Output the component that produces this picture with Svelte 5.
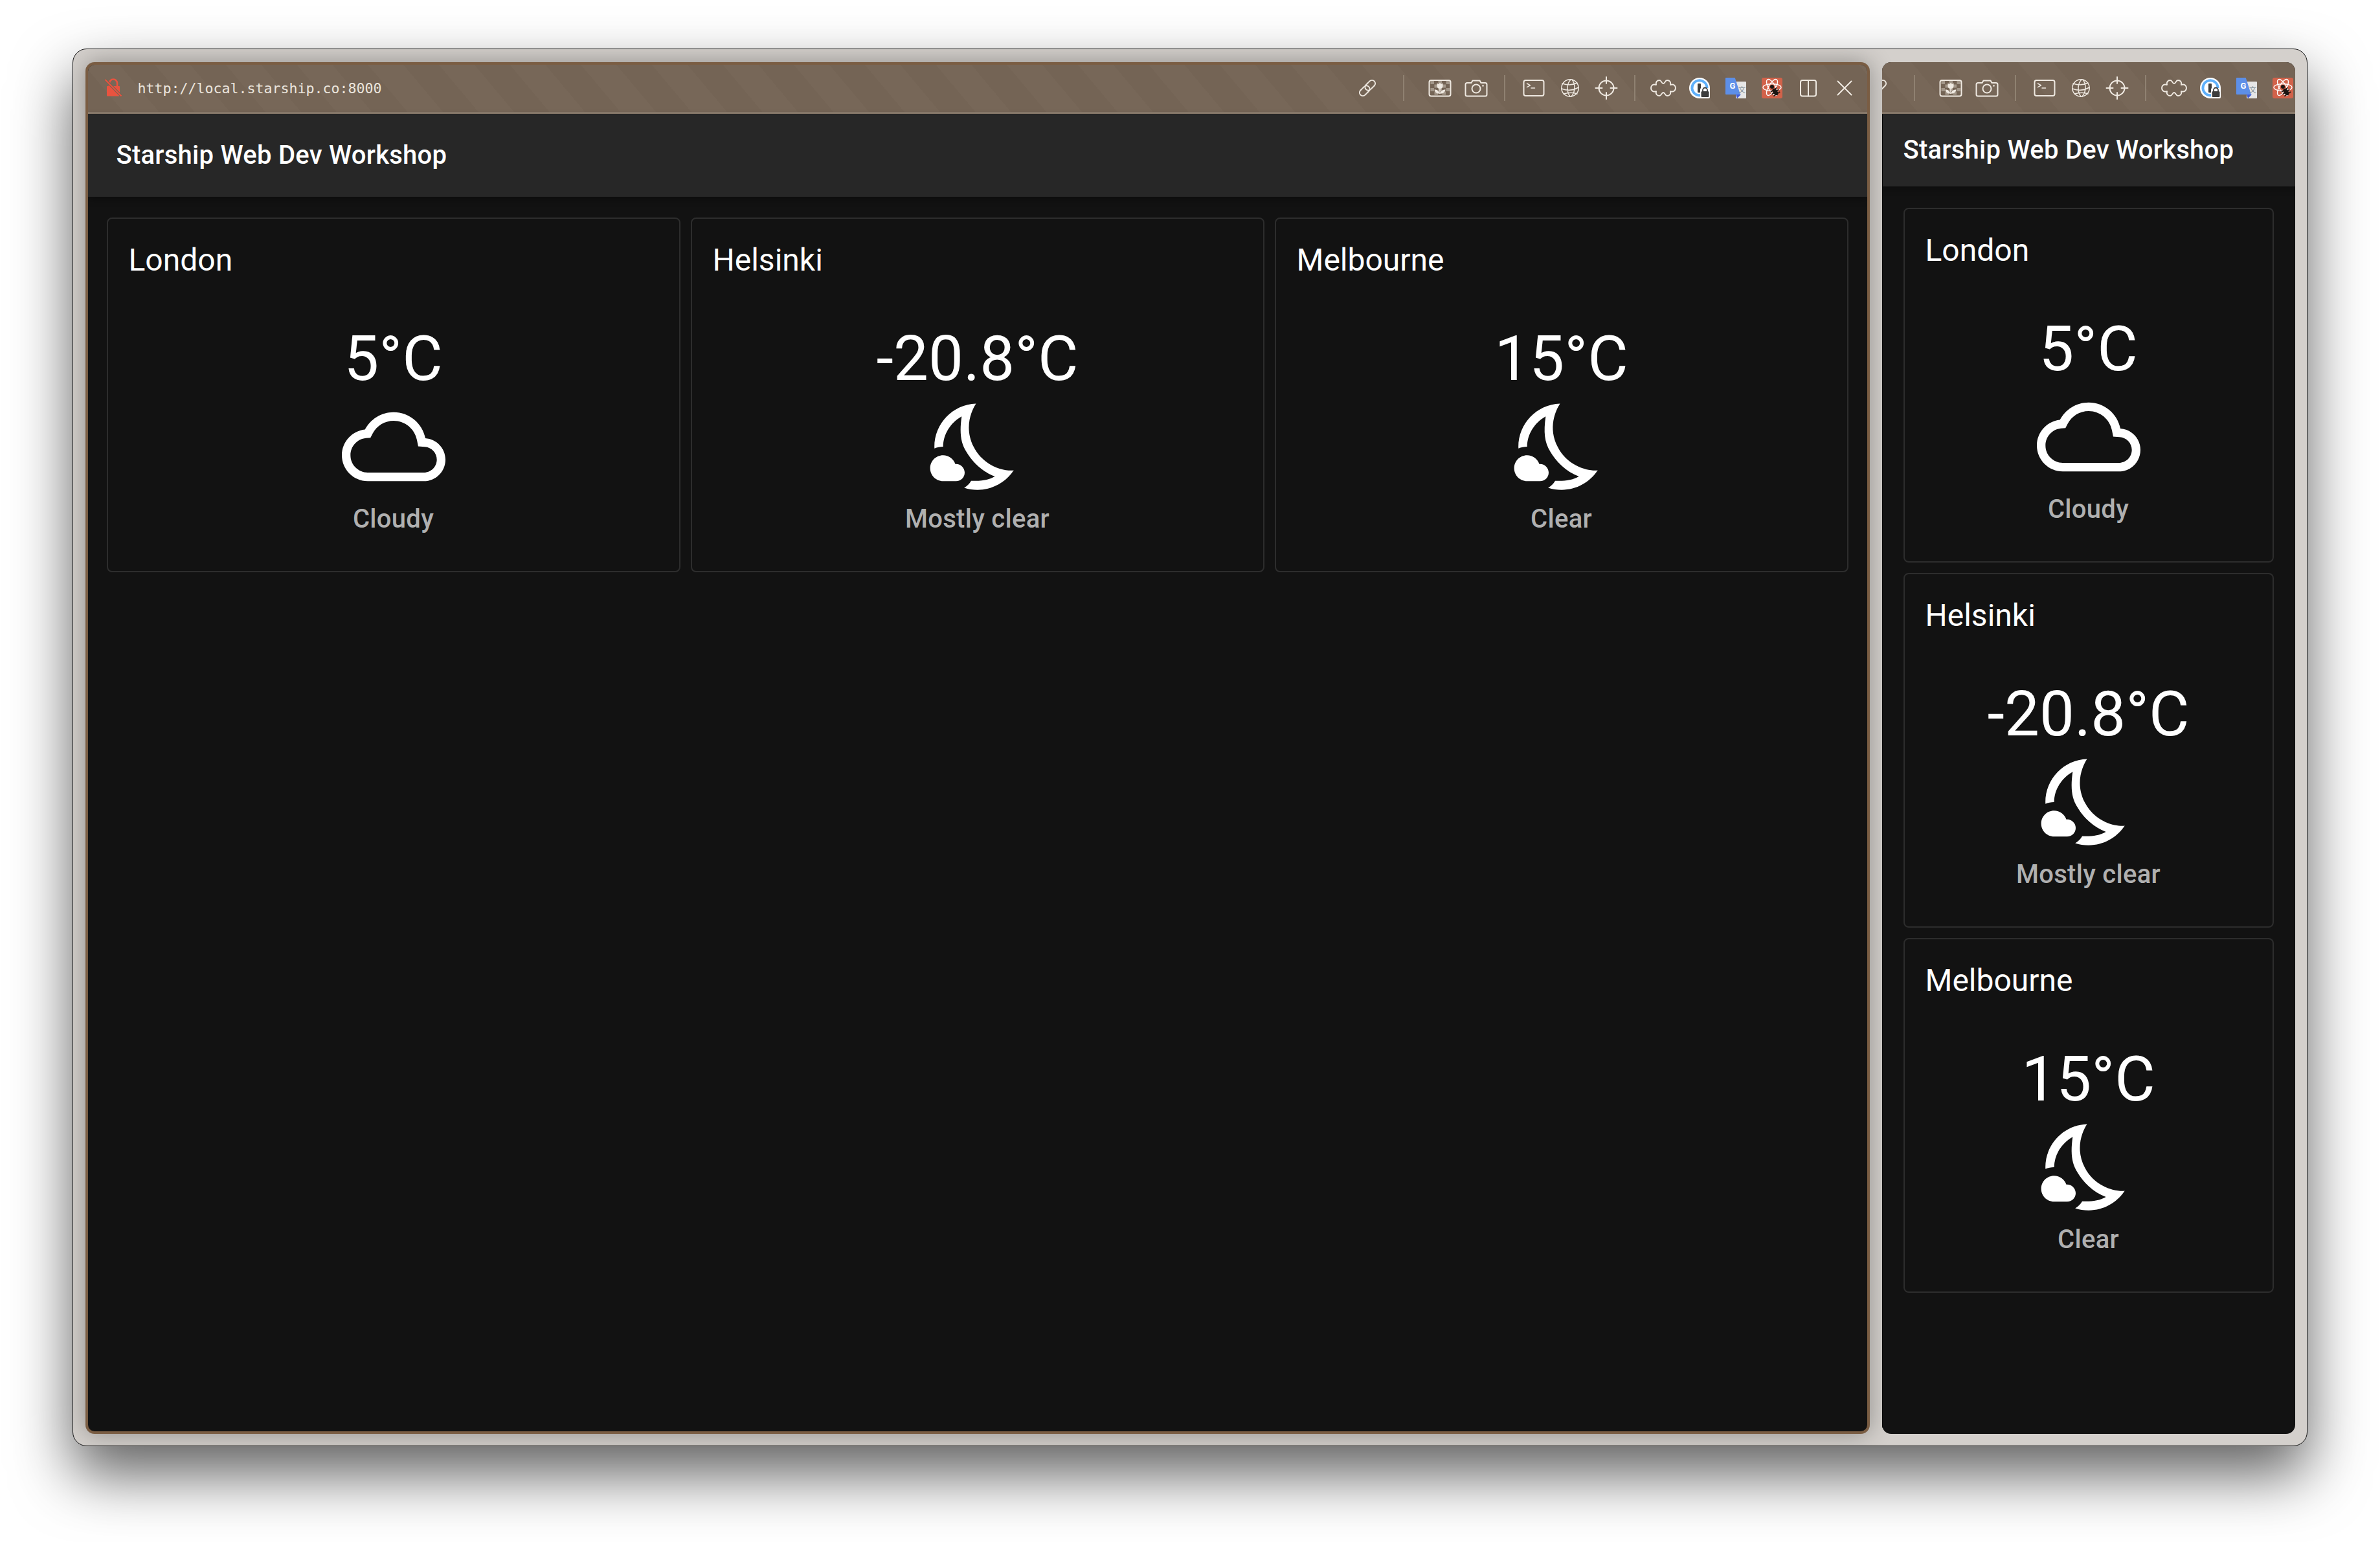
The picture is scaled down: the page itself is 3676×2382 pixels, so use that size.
<script lang="ts">
  const cities = [
    { name: "London", temp: "5°C", kind: "cloud", desc: "Cloudy" },
    { name: "Helsinki", temp: "-20.8°C", kind: "night", desc: "Mostly clear" },
    { name: "Melbourne", temp: "15°C", kind: "night", desc: "Clear" }
  ];

  // checker behind the tulip in the screenshot icon
  const checker = [];
  for (let r = 0; r < 4; r++) {
    for (let c = 0; c < 5; c++) {
      if ((r + c) % 2 === 0) checker.push({ x: 5.5 + c * 6, y: 9 + r * 5.5 });
    }
  }
</script>

{#snippet tools()}
  <div class="tools">
    <span class="slot">
      <svg viewBox="0 0 40 40" class="line">
        <g transform="rotate(-45 20 20)">
          <rect x="5" y="15" width="18" height="10" rx="5" />
          <rect x="17" y="15" width="18" height="10" rx="5" />
        </g>
      </svg>
    </span>
    <span class="sep wide"></span>
    <span class="slot">
      <svg viewBox="0 0 40 40" class="line">
        {#each checker as s}
          <rect class="check" x={s.x} y={s.y} width="5.5" height="5" />
        {/each}
        <rect x="3.5" y="8" width="33" height="24.5" rx="3" />
        <path class="fill" d="M15.5 12.5l2.3 1.6 2.2-2.1 2.2 2.1 2.3-1.6v4.5c0 2.4-2 4-4.5 4s-4.5-1.6-4.5-4z" />
        <path class="fill" d="M19.3 21h1.4v8h-1.4zM11.5 22.5c3.5-.5 7 1.5 8 6-4 .5-7.5-2-8-6zM28.5 22.5c-3.5-.5-7 1.5-8 6 4 .5 7.5-2 8-6z" />
      </svg>
    </span>
    <span class="slot">
      <svg viewBox="0 0 40 40" class="line">
        <path d="M6 12h6.5l2-3.5h11l2 3.5H34c1.5 0 2.5 1 2.5 2.5V30c0 1.5-1 2.5-2.5 2.5H6c-1.5 0-2.5-1-2.5-2.5V14.5C3.5 13 4.5 12 6 12z" />
        <circle cx="20" cy="21" r="6.5" />
        <circle class="fill" cx="30.5" cy="16.5" r="1.3" />
      </svg>
    </span>
    <span class="sep s1"></span>
    <span class="slot">
      <svg viewBox="0 0 40 40" class="line">
        <rect x="4.5" y="8" width="31" height="24" rx="3" />
        <path d="M9.5 13l5 2.8-5 2.8M16 20h5.5" stroke-width="1.5" />
      </svg>
    </span>
    <span class="slot">
      <svg viewBox="0 0 40 40" class="line thin">
        <circle cx="20" cy="20" r="13.2" />
        <path d="M21 7c-6 6-7 18-1 26M23 7c5 6 6 18-1 26M8 13c8 3 17 2 23-1M6.8 21c8 3 18 3 26-2M10 29c7-2 14-3 21 0" />
      </svg>
    </span>
    <span class="slot">
      <svg viewBox="0 0 40 40" class="line">
        <circle cx="20" cy="20" r="11.5" />
        <path d="M20 3v10M20 27v10M3.5 20h10M26.5 20h10" />
      </svg>
    </span>
    <span class="sep s2"></span>
    <span class="slot">
      <svg viewBox="0 0 40 40" class="line">
        <path d="M9 15C8 11 10 8 14 8C17.500 8 17 13 20 13C23 13 22.500 8 26 8C30 8 32 11 31 15C36 13 39 16.500 39 20C39 23.500 36 27 31 25C32 29 30 32 26 32C22.500 32 23 27 20 27C17 27 17.500 32 14 32C10 32 8 29 9 25C4 27 1 23.500 1 20C1 16.500 4 13 9 15Z" />
      </svg>
    </span>
    <span class="slot">
      <svg viewBox="0 0 40 40">
        <circle cx="20" cy="20" r="16" fill="#fff" />
        <path d="M28.5 27.5a11.5 11.5 0 1 1 3-7.5" fill="none" stroke="#5fb0fb" stroke-width="4" />
        <rect x="17" y="13" width="5" height="14" rx="1" fill="#3d3d3d" />
        <rect x="21" y="20" width="15" height="16" rx="2" fill="#fff" />
        <rect x="22.5" y="25" width="12" height="9" rx="1.5" fill="#3d3d3d" />
        <path d="M25 25v-2a3.500 3.500 0 0 1 7 0v2" fill="none" stroke="#3d3d3d" stroke-width="1.8" />
      </svg>
    </span>
    <span class="slot">
      <svg viewBox="0 0 40 40">
        <rect x="20" y="10" width="16" height="26" rx="1" fill="#e6e6e6" />
        <path d="M20 30h8l-6 6z" fill="#3f5bd8" />
        <path d="M5 4h13.7L27 30H5a1 1 0 0 1-1-1V5a1 1 0 0 1 1-1z" fill="#5d8fe8" />
        <text x="10.5" y="20.5" class="gt-g">G</text>
        <text x="24" y="27" class="gt-zh">文</text>
      </svg>
    </span>
    <span class="slot">
      <svg viewBox="0 0 40 40">
        <rect x="4" y="4" width="32" height="32" rx="3" fill="#d2624a" />
        <g fill="none" stroke="#fff" stroke-width="1.4">
          <ellipse cx="20" cy="19" rx="14" ry="5.5" />
          <ellipse cx="20" cy="19" rx="14" ry="5.5" transform="rotate(60 20 19)" />
          <ellipse cx="20" cy="19" rx="14" ry="5.5" transform="rotate(-60 20 19)" />
        </g>
        <circle cx="20" cy="18" r="3" fill="#1b1512" />
        <g transform="rotate(-35 25 26)">
          <ellipse cx="25" cy="26" rx="3.5" ry="6" fill="#1b1512" />
          <path d="M19 22h12M18.5 26h13M19 30h12" stroke="#1b1512" stroke-width="1.5" />
        </g>
      </svg>
    </span>
    <span class="slot">
      <svg viewBox="0 0 40 40" class="line">
        <rect x="8" y="8" width="24" height="24.5" rx="3" />
        <path d="M20 8v24.5" />
      </svg>
    </span>
    <span class="slot">
      <svg viewBox="0 0 40 40" class="line">
        <path d="M9.5 9.5L30.5 30.5M30.5 9.5L9.5 30.5" />
      </svg>
    </span>
  </div>
{/snippet}

{#snippet dashboard(compact)}
  <header class="appbar" class:compact>Starship Web Dev Workshop</header>
  <div class="cards" class:compact>
    {#each cities as city}
      <section class="card">
        <h2>{city.name}</h2>
        <div class="temp">{city.temp}</div>
        <svg class="weather" viewBox="0 0 24 24">
          {#if city.kind === "cloud"}
            <path d="M19.35 10.04C18.67 6.59 15.64 4 12 4 9.11 4 6.6 5.64 5.35 8.04 2.34 8.36 0 10.91 0 14c0 3.31 2.69 6 6 6h13c2.76 0 5-2.24 5-5 0-2.64-2.05-4.78-4.65-4.96zM19 18H6c-2.21 0-4-1.79-4-4 0-2.05 1.53-3.76 3.56-3.97l1.07-.11.5-.95C8.08 7.14 9.94 6 12 6c2.62 0 4.88 1.86 5.39 4.43l.3 1.5 1.53.11c1.56.1 2.78 1.41 2.78 2.96 0 1.65-1.35 3-3 3z" />
          {:else}
            <path d="M11.1 12.08c-2.33-4.51-.5-8.48.53-10.07C6.27 2.2 1.98 6.59 1.98 12c0 .14.02.28.02.42.62-.27 1.29-.42 2-.42C4.05 9.1 5.7 6.5 8.3 5 7.8 8.6 8 11 9.4 13.2 10.6 15.3 13 17.8 16 18.9c-1.6.9-3.4 1.1-5.5 1-.4.7-.9 1.2-1.62 1.61.98.32 2.03.5 3.11.5 3.5 0 6.58-1.8 8.37-4.52-2.36.23-6.98-.97-9.26-5.41z" />
            <path d="M7 16h-.18C6.4 14.84 5.3 14 4 14c-1.66 0-3 1.34-3 3s1.34 3 3 3h3c1.1 0 2-.9 2-2s-.9-2-2-2z" />
          {/if}
        </svg>
        <div class="desc">{city.desc}</div>
      </section>
    {/each}
  </div>
{/snippet}

<div class="stage">
  <div class="frame">
    <div class="panel main">
      <div class="chrome">
        <svg class="lock" viewBox="0 0 30 32">
          <path d="M9 14V8.5a6 6 0 0 1 12 0V14" fill="none" stroke="#e9533f" stroke-width="2.6" />
          <rect x="5" y="13" width="20" height="15.5" rx="1" fill="#e9533f" />
          <path d="M3 3.5l25 25.500" stroke="#746454" stroke-width="4" />
          <path d="M2.5 3l25 25.500" stroke="#e9533f" stroke-width="2" />
        </svg>
        <span class="url">http://local.starship.co:8000</span>
        <span class="grow"></span>
        {@render tools()}
      </div>
      {@render dashboard(false)}
    </div>
    <div class="panel side">
      <div class="chrome">
        {@render tools()}
      </div>
      {@render dashboard(true)}
    </div>
  </div>
</div>

<style>
  :global(body) {
    margin: 0;
    background: #fff;
  }

  .stage {
    width: 3676px;
    height: 2382px;
    box-sizing: border-box;
    padding: 75px 112px 148px;
    font-family: Roboto, "Noto Sans", sans-serif;
    overflow: hidden;
  }

  .frame {
    height: 100%;
    box-sizing: border-box;
    display: flex;
    gap: 19px;
    padding: 19.5px 18.5px 18.5px;
    background: #d4d0cc;
    border: 1.5px solid #111;
    border-radius: 22px;
    box-shadow: 0 44px 92px rgba(0, 0, 0, 0.62);
    overflow: hidden;
  }

  .panel {
    display: flex;
    flex-direction: column;
    background: #121212;
    border-radius: 14px;
    overflow: hidden;
    box-sizing: border-box;
  }

  .main {
    flex: none;
    width: 2756px;
    border: 4px solid #7a5d43;
    box-shadow: 0 0 36px rgba(0, 0, 0, 0.32);
  }

  .side {
    flex: 1;
    min-width: 0;
    z-index: 1;
  }

  .chrome {
    flex: none;
    display: flex;
    align-items: center;
    box-sizing: border-box;
    background: repeating-linear-gradient(50deg, #746455 0 42px, #776758 42px 84px);
    border-bottom: 3px solid #8b7c6d;
  }

  .main .chrome {
    height: 76px;
    padding: 0 7px 0 24px;
  }

  .side .chrome {
    height: 80px;
    padding-top: 3px;
  }

  .side .tools {
    margin-left: -34px;
  }

  .lock {
    width: 30px;
    height: 32px;
    flex: none;
  }

  .url {
    margin-left: 23px;
    font-family: "DejaVu Sans Mono", monospace;
    font-size: 21.6px;
    color: #ebe5dd;
  }

  .grow {
    flex: 1;
  }

  .tools {
    display: flex;
    align-items: center;
    flex: none;
  }

  .slot {
    width: 56px;
    height: 40px;
    display: flex;
    align-items: center;
    justify-content: center;
    flex: none;
  }

  .slot svg {
    width: 40px;
    height: 40px;
  }

  .line {
    fill: none;
    stroke: #efe9e1;
    stroke-width: 2;
    stroke-linecap: round;
    stroke-linejoin: round;
  }

  .line.thin {
    stroke-width: 1.5;
  }

  .fill {
    fill: #efe9e1;
    stroke: none;
  }

  .check {
    fill: #a3978a;
    stroke: none;
  }

  .gt-g {
    fill: #fff;
    stroke: none;
    font: 700 13px Roboto, sans-serif;
  }

  .gt-zh {
    fill: #7d8b94;
    font: 400 11px "Noto Sans CJK SC", sans-serif;
  }

  .sep {
    position: relative;
    height: 40px;
    flex: none;
    width: 33px;
  }

  .sep::after {
    content: "";
    position: absolute;
    left: calc(50% - 1px);
    top: 0;
    bottom: 0;
    width: 2px;
    background: #8f8171;
  }

  .sep.wide {
    width: 56px;
  }

  .sep.s2 {
    width: 32px;
  }

  .appbar {
    flex: none;
    box-sizing: border-box;
    height: 128px;
    padding: 0 44px;
    display: flex;
    align-items: center;
    background: #272727;
    color: #fff;
    font-size: 40px;
    font-weight: 500;
    letter-spacing: 0.25px;
    box-shadow: 0 4px 10px rgba(0, 0, 0, 0.3);
    position: relative;
  }

  .appbar.compact {
    height: 112px;
    padding: 0 32px;
    border-left: 1px solid #000;
  }

  .cards {
    flex: 1;
    display: grid;
    grid-template-columns: repeat(3, 1fr);
    align-content: start;
    gap: 16px;
    padding: 32px 29px;
  }

  .cards.compact {
    grid-template-columns: 1fr;
    padding: 33px 33px 33px 32px;
    border-left: 1px solid #000;
  }

  .card {
    box-sizing: border-box;
    height: 548px;
    padding: 32px 32px 48px;
    border: 2px solid #2d2d2d;
    border-radius: 8px;
    display: flex;
    flex-direction: column;
    align-items: center;
    color: #fff;
  }

  .card h2 {
    align-self: stretch;
    margin: 0 0 64px;
    font-size: 48px;
    font-weight: 400;
    line-height: 64px;
  }

  .temp {
    font-size: 96px;
    line-height: 112px;
    font-weight: 400;
  }

  .weather {
    width: 160px;
    height: 160px;
    fill: #fff;
    flex: none;
  }

  .desc {
    font-size: 40px;
    font-weight: 500;
    line-height: 64px;
    letter-spacing: 0.3px;
    color: #b0b0b0;
  }
</style>
